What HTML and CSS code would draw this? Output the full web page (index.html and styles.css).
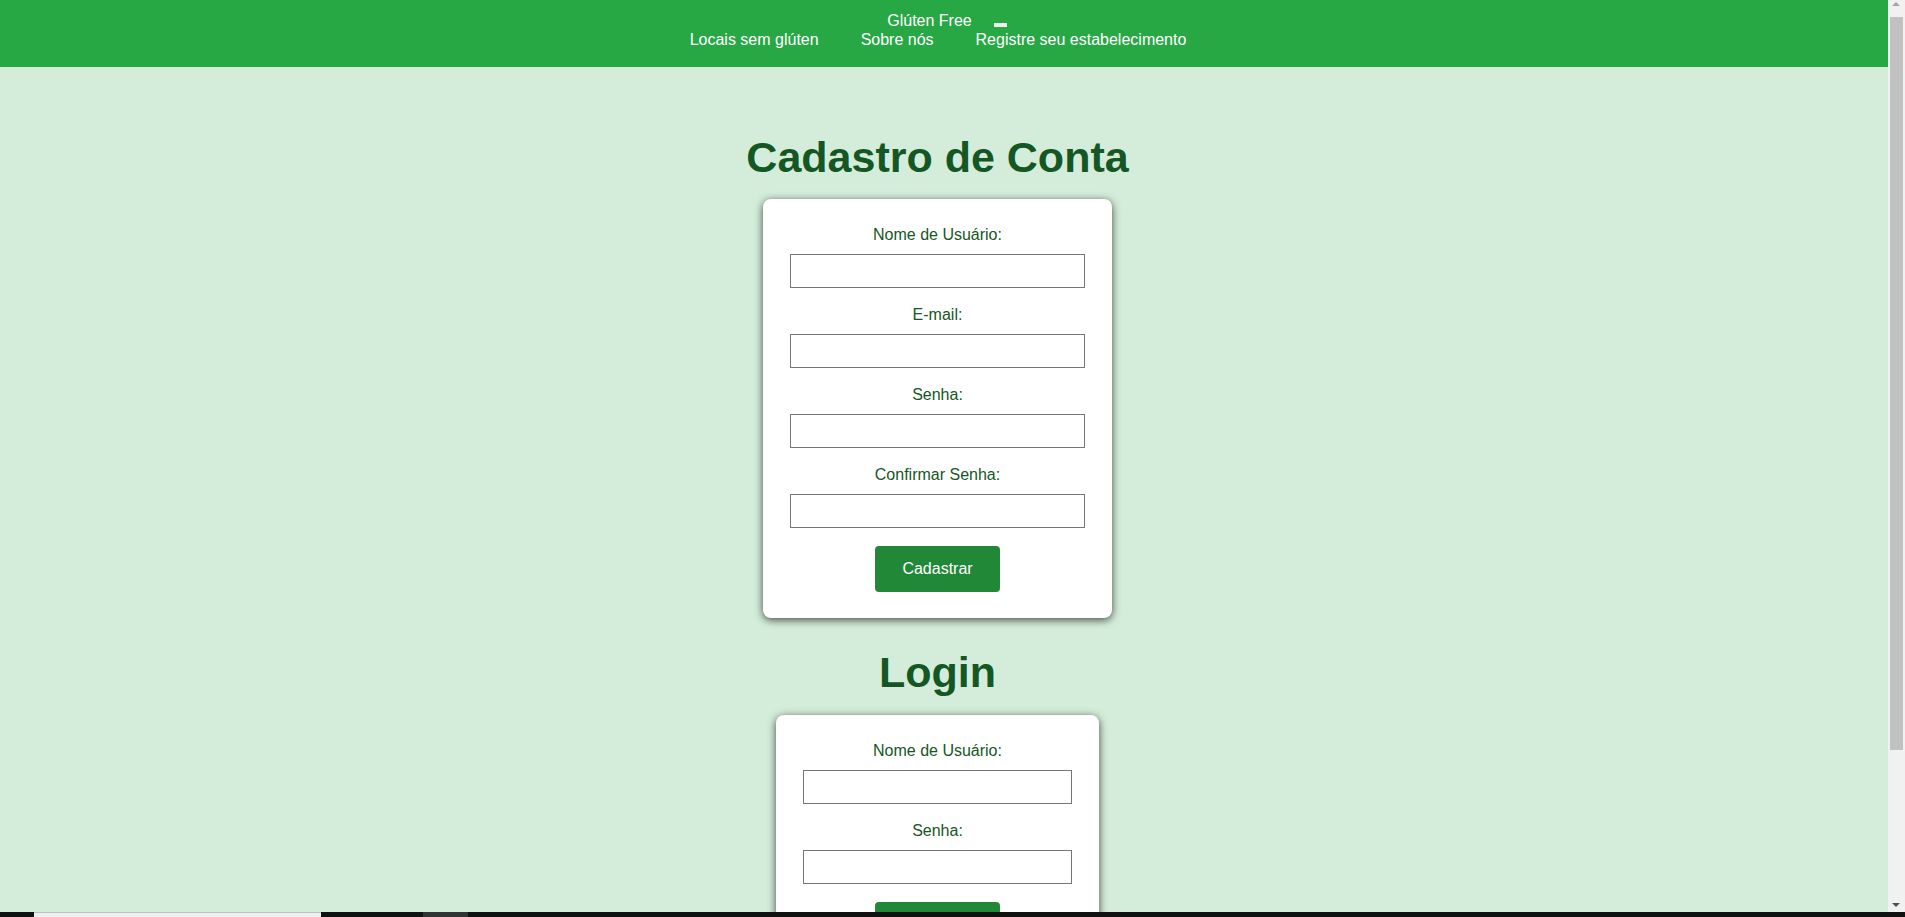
FILE: index.html
```html
<!DOCTYPE html>
<html lang="pt-BR">
<head>
<meta charset="utf-8">
<title>Glúten Free - Cadastro</title>
<link rel="stylesheet" href="styles.css">
</head>
<body>
<header class="site-header">
  <div class="brand-row">
    <span class="brand">Glúten Free</span>
    <span class="menu-toggle"></span>
  </div>
  <nav class="nav-row">
    <a class="nav-link" href="#">Locais sem glúten</a>
    <a class="nav-link" href="#">Sobre nós</a>
    <a class="nav-link" href="#">Registre seu estabelecimento</a>
  </nav>
</header>
<main class="main">
  <h1 class="title">Cadastro de Conta</h1>
  <form class="card card-register">
    <label class="field-label" for="r-user">Nome de Usuário:</label>
    <input class="field-input" id="r-user" type="text">
    <label class="field-label" for="r-mail">E-mail:</label>
    <input class="field-input" id="r-mail" type="email">
    <label class="field-label" for="r-pass">Senha:</label>
    <input class="field-input" id="r-pass" type="password">
    <label class="field-label" for="r-pass2">Confirmar Senha:</label>
    <input class="field-input" id="r-pass2" type="password">
    <button class="btn" type="button">Cadastrar</button>
  </form>
  <h1 class="title">Login</h1>
  <form class="card card-login">
    <label class="field-label" for="l-user">Nome de Usuário:</label>
    <input class="field-input" id="l-user" type="text">
    <label class="field-label" for="l-pass">Senha:</label>
    <input class="field-input" id="l-pass" type="password">
    <button class="btn" type="button">Entrar</button>
  </form>
</main>
<div class="fake-scrollbar" aria-hidden="true">
  <span class="sb-arrow sb-up"></span>
  <span class="sb-thumb"></span>
  <span class="sb-arrow sb-down"></span>
</div>
<div class="taskbar" aria-hidden="true">
  <span class="tb-light"></span>
  <span class="tb-gray"></span>
</div>
</body>
</html>
```
FILE: styles.css
```css
body {
  margin: 0 17px 0 0;
  background: #d4edda;
  font-family: "Liberation Sans", Arial, sans-serif;
  font-size: 16px;
  color: #155724;
}
.site-header {
  background: #28a745;
  color: #ffffff;
  padding: 12px 0 18px;
  height: 67px;
  box-sizing: border-box;
}
.brand-row {
  display: flex;
  justify-content: center;
  align-items: flex-start;
  gap: 22px;
  padding-left: 6px;
}
.brand {
  line-height: 18.4px;
}
.menu-toggle {
  width: 13px;
  height: 4px;
  margin-top: 11px;
  background: #f0f0f0;
}
.nav-row {
  display: flex;
  justify-content: center;
  gap: 42px;
  padding-right: 12px;
  margin-top: 1px;
}
.nav-link {
  color: #ffffff;
  text-decoration: none;
  line-height: 18.4px;
}
.main {
  display: flex;
  flex-direction: column;
  align-items: center;
  padding: 36px 13px 123px 0;
}
.title {
  margin: 30px 0 17px;
  font-size: 43px;
  font-weight: bold;
  line-height: 49.4px;
  color: #155724;
}
.card {
  display: flex;
  flex-direction: column;
  align-items: center;
  background: #ffffff;
  border-radius: 8px;
  padding: 27px 27px 26px;
  box-shadow: 0 2px 8px rgba(0, 0, 0, 0.7);
}
.card-register {
  width: 295px;
}
.card-login {
  width: 269px;
}
.field-label {
  display: block;
  line-height: 18.4px;
  margin-bottom: 9.6px;
  color: #155724;
}
.field-input {
  display: block;
  width: 100%;
  height: 34px;
  box-sizing: border-box;
  margin: 0 0 18px;
  border: 1px solid #767676;
  border-radius: 0;
  padding: 0 8px;
  font: inherit;
  background: #ffffff;
}
.btn {
  width: 125px;
  height: 46px;
  border: none;
  border-radius: 4px;
  background: #218838;
  color: #ffffff;
  font-family: inherit;
  font-size: 16px;
  cursor: pointer;
}
.fake-scrollbar {
  position: fixed;
  top: 0;
  right: 0;
  width: 17px;
  height: 100%;
  background: #f1f1f1;
}
.sb-thumb {
  position: absolute;
  top: 17px;
  left: 2px;
  width: 13px;
  height: 733px;
  background: #c1c1c1;
}
.sb-arrow {
  position: absolute;
  left: 4px;
  width: 0;
  height: 0;
  border-left: 4.5px solid transparent;
  border-right: 4.5px solid transparent;
}
.sb-up {
  top: 2px;
  border-bottom: 4px solid #a3a3a3;
}
.sb-down {
  bottom: 10px;
  border-top: 4px solid #505050;
}
.taskbar {
  position: fixed;
  left: 0;
  right: 0;
  bottom: 0;
  height: 5px;
  background: #111111;
}
.tb-light {
  position: absolute;
  left: 34px;
  top: 0;
  width: 287px;
  height: 5px;
  background: #f0f0f0;
  border-top: 1px solid #c0c0c0;
  box-sizing: border-box;
}
.tb-gray {
  position: absolute;
  left: 423px;
  top: 0;
  width: 45px;
  height: 5px;
  background: #333333;
}
```
